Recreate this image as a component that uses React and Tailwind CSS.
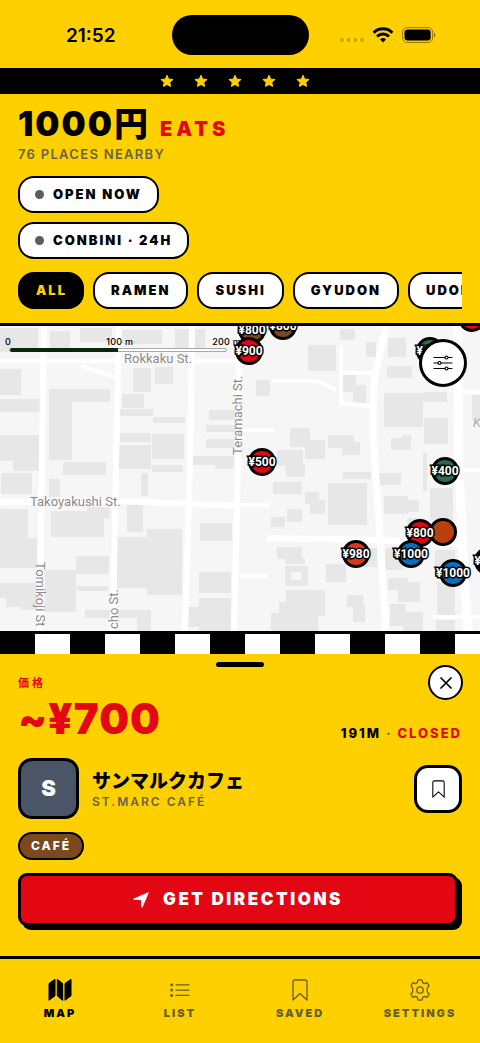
import React from 'react';

const categories = ['ALL', 'RAMEN', 'SUSHI', 'GYUDON', 'UDON'];

// x, y, width, height
const buildings = [
  [0, 2, 38, 24], [50, 5, 20, 18], [80, 2, 32, 14], [122, 4, 40, 14], [175, 3, 30, 20],
  [0, 43, 21, 26], [0, 73, 40, 13], [0, 109, 39, 26], [13, 134, 26, 11], [1, 147, 31, 21],
  [50, 63, 60, 13], [49, 63, 23, 71], [63, 136, 43, 13], [49, 153, 11, 18],
  [133, 42, 18, 24], [155, 41, 18, 17], [122, 68, 22, 14], [120, 83, 33, 7], [153, 91, 32, 6],
  [120, 107, 31, 9], [152, 108, 32, 25], [119, 119, 32, 24], [152, 139, 31, 7], [141, 147, 7, 23],
  [209, 84, 26, 10], [206, 99, 29, 7], [206, 113, 28, 9], [193, 130, 41, 9], [215, 138, 18, 5],
  [0, 183, 28, 31], [0, 212, 37, 30], [51, 185, 53, 26], [87, 181, 23, 11], [127, 179, 16, 27],
  [117, 211, 30, 51], [147, 203, 35, 66], [200, 197, 32, 18], [199, 246, 32, 21],
  [199, 272, 32, 34], [188, 281, 12, 20], [76, 230, 33, 18], [45, 244, 31, 42], [77, 260, 31, 5],
  [0, 257, 36, 15], [6, 271, 32, 10], [21, 280, 17, 4], [85, 284, 66, 8], [137, 292, 14, 14],
  [256, 54, 14, 16], [343, 49, 13, 17], [353, 59, 13, 18], [384, 67, 39, 34], [423, 66, 24, 10],
  [424, 92, 24, 26], [472, 69, 8, 26], [290, 102, 20, 19], [305, 114, 20, 19], [277, 124, 26, 16],
  [286, 138, 19, 13], [328, 109, 26, 13], [342, 116, 18, 13], [391, 112, 20, 12], [402, 109, 9, 13],
  [343, 146, 28, 7], [379, 147, 22, 12], [273, 156, 29, 12], [305, 166, 14, 12], [310, 174, 15, 14],
  [328, 157, 39, 42], [384, 170, 24, 18], [396, 174, 23, 12], [430, 162, 23, 32], [423, 127, 4, 38],
  [271, 191, 14, 10], [287, 183, 15, 13], [407, 192, 18, 12], [277, 221, 25, 12], [285, 232, 20, 6],
  [285, 240, 23, 20], [326, 238, 20, 18], [360, 222, 17, 19], [385, 222, 18, 22],
  [286, 264, 39, 14], [279, 276, 46, 14], [271, 287, 47, 18], [347, 269, 16, 12], [353, 277, 12, 19],
  [388, 252, 20, 12], [398, 256, 22, 20], [390, 278, 16, 22], [403, 286, 20, 19],
  [435, 224, 20, 16], [437, 256, 18, 33], [436, 294, 19, 11],
  [308, 19, 28, 26], [388, 12, 18, 19], [387, 40, 25, 12], [340, 3, 15, 11], [366, 16, 10, 15],
];

const pins = [
  { x: 283, y: 0, price: '¥800', color: 'bg-[#7a4a1e]' },
  { x: 252, y: 4, price: '¥800', color: 'bg-[#7a4a1e]' },
  { x: 249, y: 25, price: '¥900', color: 'bg-[#e30613]' },
  { x: 472, y: -8, price: '', color: 'bg-[#e30613]' },
  { x: 430, y: 25, price: '¥400', color: 'bg-[#2d6a4f]' },
  { x: 262, y: 136, price: '¥500', color: 'bg-[#e30613]' },
  { x: 445, y: 145, price: '¥400', color: 'bg-[#2d6a4f]' },
  { x: 443, y: 206, price: '', color: 'bg-[#b8400e]' },
  { x: 420, y: 207, price: '¥800', color: 'bg-[#e30613]' },
  { x: 411, y: 228, price: '¥1000', color: 'bg-[#0a6ebd]' },
  { x: 356, y: 228, price: '¥980', color: 'bg-[#d9381e]' },
  { x: 453, y: 247, price: '¥1000', color: 'bg-[#0a6ebd]' },
  { x: 488, y: 235, price: '¥900', color: 'bg-black' },
];

const Star = () => (
  <svg viewBox="0 0 24 24" className="size-[14px]" fill="#ffd000" stroke="#ffd000" strokeWidth="2" strokeLinejoin="round">
    <path d="M12 2.500l2.800 6.300 6.900.7-5.200 4.600 1.500 6.800L12 17.400l-6 3.500 1.500-6.800-5.200-4.600 6.900-.7z" />
  </svg>
);

const BookmarkIcon = ({ className }) => (
  <svg viewBox="0 0 16 22" className={className} fill="none" stroke="currentColor" strokeWidth="1.300" strokeLinejoin="round">
    <path d="M1 3a2 2 0 0 1 2-2h10a2 2 0 0 1 2 2v18l-7-6.500L1 21z" />
  </svg>
);

const StatusBar = () => (
  <div className="grid grid-cols-[1fr_137px_1fr] items-center pt-[15px] pb-[13px]">
    <span className="pt-0.5 pl-2.5 text-center text-[19px] leading-6 font-semibold">21:52</span>
    <div className="h-10 rounded-full bg-black" />
    <div className="flex items-center justify-end gap-2 pr-11">
      <svg viewBox="0 0 24 6" className="mt-2.5 h-1.5 w-6" fill="#c9a400">
        <circle cx="2" cy="3" r="2" />
        <circle cx="8.700" cy="3" r="2" />
        <circle cx="15.400" cy="3" r="2" />
        <circle cx="22" cy="3" r="2" />
      </svg>
      <svg viewBox="0 0 22 16" className="h-4 w-[22px]" fill="none" stroke="#000" strokeWidth="3">
        <path d="M1.600 5.700a13.400 13.400 0 0 1 18.800 0" />
        <path d="M5 9.500a8.500 8.500 0 0 1 12 0" />
        <path d="M11 15.500l-3-3.100a4.300 4.300 0 0 1 6 0z" fill="#000" stroke="none" />
      </svg>
      <svg viewBox="0 0 34 16" className="h-4 w-[34px]">
        <rect x="0.600" y="0.600" width="30" height="14.800" rx="4.500" fill="none" stroke="#8f7500" />
        <rect x="2.500" y="2.500" width="26.200" height="11" rx="3" />
        <path d="M32 5.500c1.800.6 1.800 4.400 0 5z" fill="#8f7500" />
      </svg>
    </div>
  </div>
);

const TogglePill = ({ children }) => (
  <button className="flex h-[37px] items-center gap-[9px] rounded-2xl border-2 border-black bg-white px-[15px] text-[13px] font-black tracking-[2px]">
    <span className="size-[9px] rounded-full bg-[#5c5c5c]" />
    {children}
  </button>
);

const Header = () => (
  <header className="border-b-3 border-black px-[18px] pt-3 pb-[14px]">
    <h1 className="flex items-baseline gap-2.5 text-[34px] leading-9 font-black">
      <span className="tracking-[2px]">1000円</span>
      <span className="text-xl leading-6 tracking-[4px] text-[#e30613]">EATS</span>
    </h1>
    <p className="mt-1 text-[13px] leading-4 font-semibold tracking-widest text-[#666352]">76 PLACES NEARBY</p>
    <div className="mt-[14px] flex flex-col items-start gap-[9px]">
      <TogglePill>OPEN NOW</TogglePill>
      <TogglePill>CONBINI · 24H</TogglePill>
      <div className="mt-1 flex w-full gap-[9px] overflow-hidden">
        {categories.map((name, i) => (
          <button
            key={name}
            className={
              i === 0
                ? 'h-[37px] shrink-0 rounded-2xl border-2 border-black bg-black pr-[15px] pl-4 text-[13px] font-black tracking-[2px] text-[#ffd000]'
                : 'h-[37px] shrink-0 rounded-2xl border-2 border-black bg-white px-4 text-[13px] font-black tracking-[2px]'
            }
          >
            {name}
          </button>
        ))}
      </div>
    </div>
  </header>
);

const MapView = () => (
  <section aria-label="Map" className="relative min-h-[305px] flex-1 overflow-hidden bg-[#f6f6f6]">
    <svg viewBox="0 0 480 305" preserveAspectRatio="xMinYMin slice" className="absolute inset-0 h-full w-full">
      <g fill="#e7e7e7">
        {buildings.map(([x, y, w, h], i) => (
          <rect key={i} x={x} y={y} width={w} height={h} />
        ))}
      </g>
      <rect x="291" y="246" width="11" height="8" fill="#f6f6f6" />
      <g fill="none" stroke="#fff" strokeWidth="6">
        <path d="M44 0L42 120 40 305" />
        <path d="M119 0L116 140 113 305" />
        <path d="M192 0L190 140 185 305" />
        <path d="M240 0L238 140 234 305" />
        <path d="M386 0L374 54 373 110 380 210 386 305" strokeWidth="7" />
        <path d="M457 0L459 140 464 250 468 305" strokeWidth="9" />
        <path d="M0 176L120 175 240 180" />
        <path d="M267 212L380 214 465 218" />
        <path d="M0 35H240" strokeWidth="4" />
        <path d="M82 40l32 11M240 179h30M240 250h28M272 55h46l18 9M341 20v57l30 3M340 47h34M462 66h18M462 144h18M432 291h48M240 104h34" strokeWidth="4" />
      </g>
      <g fill="#8b8b8b" fontSize="13" className="font-['Roboto',sans-serif]">
        <text x="124" y="37">Rokkaku St.</text>
        <text x="30" y="180">Takoyakushi St.</text>
        <text transform="translate(242 129) rotate(-90)">Teramachi St.</text>
        <text transform="translate(45 236) rotate(90)" dy="9" className="[dominant-baseline:auto]" textAnchor="start">Tomikoji St</text>
        <text transform="translate(118 263) rotate(-90)" textAnchor="end">cho St.</text>
        <text x="473" y="101" fontStyle="italic" fill="#aaa">K</text>
      </g>
    </svg>

    <div className="absolute top-2.5 left-[5px] w-[236px] text-[9px] leading-3 font-medium">
      <div className="flex justify-between tracking-wide">
        <span>0</span>
        <span className="pl-4">100 m</span>
        <span>200 m</span>
      </div>
      <div className="ml-1 h-1 w-[218px] rounded-full border border-[#a8a8a8] bg-white">
        <div className="-mt-px h-1 w-1/2 rounded-l-full bg-[#0c260c]" />
      </div>
    </div>

    {pins.map((pin, i) => (
      <button
        key={i}
        aria-label={pin.price || 'Place'}
        className={`absolute -mt-3.5 -ml-3.5 flex size-7 items-center justify-center rounded-full border-3 border-black font-['Roboto',sans-serif] text-xs font-bold text-white [paint-order:stroke_fill] [-webkit-text-stroke:3px_#000] ${pin.color}`}
        style={{ left: pin.x, top: pin.y }}
      >
        {pin.price}
      </button>
    ))}

    <button aria-label="Filters" className="absolute top-[13px] right-[13px] flex size-12 items-center justify-center rounded-full border-3 border-black bg-white">
      <svg viewBox="0 0 20 16" className="h-4 w-5" fill="#fff" stroke="#000" strokeWidth="1.200" strokeLinecap="round">
        <path d="M1 2.500h18M1 8h18M1 13.500h18" />
        <circle cx="13.500" cy="2.500" r="1.500" />
        <circle cx="6.500" cy="8" r="1.500" />
        <circle cx="13.500" cy="13.500" r="1.500" />
      </svg>
    </button>
  </section>
);

const PlaceSheet = () => (
  <section className="border-t-3 border-black">
    <div className="h-5 bg-[repeating-linear-gradient(90deg,#000_0_35px,#fff_35px_70px)]" />
    <div className="relative px-[18px] pt-2 pb-[30px]">
      <div className="mx-auto h-[5px] w-12 rounded-full bg-black" />
      <button aria-label="Close" className="absolute top-[11px] right-[17px] flex size-[35px] items-center justify-center rounded-full border-2 border-black bg-white">
        <svg viewBox="0 0 12 12" className="size-3" stroke="#000" strokeWidth="1.700" strokeLinecap="round">
          <path d="M1 1l10 10M11 1L1 11" />
        </svg>
      </button>

      <p className="mt-2 text-[11px] leading-4 font-bold tracking-[3px] text-[#e30613]">価格</p>
      <div className="flex items-end justify-between">
        <p className="mt-1 text-[42px] leading-[48px] font-black tracking-[1px] text-[#e30613]">~¥700</p>
        <p className="pb-0.5 text-[13px] leading-4 font-extrabold tracking-[2px]">
          191M <span className="text-[#666352]">·</span> <span className="text-[#e30613]">CLOSED</span>
        </p>
      </div>

      <div className="mt-[15px] flex items-center">
        <div className="flex size-[61px] items-center justify-center rounded-[14px] border-3 border-black bg-[#4a5568] text-[22px] font-black text-white">S</div>
        <div className="ml-[13px] flex-1 pt-0.5">
          <h2 className="text-[19px] leading-6 font-black">サンマルクカフェ</h2>
          <p className="text-xs leading-4 font-semibold tracking-[2px] text-[#666352]">ST.MARC CAFÉ</p>
        </div>
        <button aria-label="Save place" className="flex size-12 items-center justify-center rounded-[14px] border-3 border-black bg-white">
          <BookmarkIcon className="h-[18px] w-[13px]" />
        </button>
      </div>

      <span className="mt-[13px] flex h-7 w-fit items-center rounded-full border-2 border-black bg-[#7a4a1e] px-[11px] text-xs font-extrabold tracking-[2px] text-white">
        CAFÉ
      </span>

      <button className="mt-[13px] flex h-[53px] w-[calc(100%-4px)] items-center justify-center gap-3.5 rounded-[9px] border-3 border-black bg-[#e30613] text-[17px] font-black tracking-[0.15em] text-white shadow-[4px_4px_0_#000]">
        <svg viewBox="0 0 16 16" className="size-4" fill="currentColor" stroke="currentColor" strokeLinejoin="round">
          <path d="M15.300.7L.7 7.100l7.600.6.700 7.600z" />
        </svg>
        GET DIRECTIONS
      </button>
    </div>
  </section>
);

const NavItem = ({ label, active, children }) => (
  <a href="#" aria-current={active ? 'page' : undefined} className={active ? 'flex flex-col items-center gap-[3px]' : 'flex flex-col items-center gap-[3px] text-[#666030]'}>
    <span className="flex h-6 items-center">{children}</span>
    <span className="text-[11px] leading-4 font-black tracking-[2px]">{label}</span>
  </a>
);

const BottomNav = () => (
  <nav className="grid grid-cols-4 border-t-3 border-black pt-[19px] pb-[22px]">
    <NavItem label="MAP" active>
      <svg viewBox="0 0 24 24" className="size-6" fill="currentColor" stroke="currentColor" strokeLinejoin="round">
        <path d="M1 5.500L7 1.300v16.500L1 22.300zM9.300 1.300l5.400 4.200v17l-5.400-4.700zM17 5.500l6-4.200v16.500l-6 4.500z" />
      </svg>
    </NavItem>
    <NavItem label="LIST">
      <svg viewBox="0 0 20 14" className="h-3.5 w-5" fill="currentColor" stroke="currentColor" strokeWidth="1.200" strokeLinecap="round">
        <path d="M6 1.800h13M6 7.100h13M6 12.400h13" />
        <circle cx="1.700" cy="1.800" r="0.900" />
        <circle cx="1.700" cy="7.100" r="0.900" />
        <circle cx="1.700" cy="12.400" r="0.900" />
      </svg>
    </NavItem>
    <NavItem label="SAVED">
      <BookmarkIcon className="h-[22px] w-4" />
    </NavItem>
    <NavItem label="SETTINGS">
      <svg viewBox="0 0 22 22" className="size-[22px]" fill="none" stroke="currentColor" strokeWidth="1.300" strokeLinejoin="round">
        <path d="M9 .8h4l.6 2.700 1.800 1.100 2.700-.9 2 3.400-1.900 2q.3 1.900 0 3.800l1.900 2-2 3.400-2.700-.9-1.800 1.100-.6 2.700H9l-.6-2.700-1.800-1.100-2.700.9-2-3.400 1.900-2q-.3-1.900 0-3.800l-1.900-2 2-3.400 2.700.9 1.800-1.100z" />
        <circle cx="11" cy="11" r="3.200" />
      </svg>
    </NavItem>
  </nav>
);

const App = () => {
  return (
    <div className="flex min-h-screen flex-col bg-[#ffd000] font-['Inter','Noto_Sans_CJK_JP',sans-serif] text-black [font-optical-sizing:none]">
      <StatusBar />
      <div className="flex h-[26px] items-center justify-center gap-5 bg-black pr-2.5">
        <Star />
        <Star />
        <Star />
        <Star />
        <Star />
      </div>
      <Header />
      <MapView />
      <PlaceSheet />
      <BottomNav />
    </div>
  );
};

export default App;
